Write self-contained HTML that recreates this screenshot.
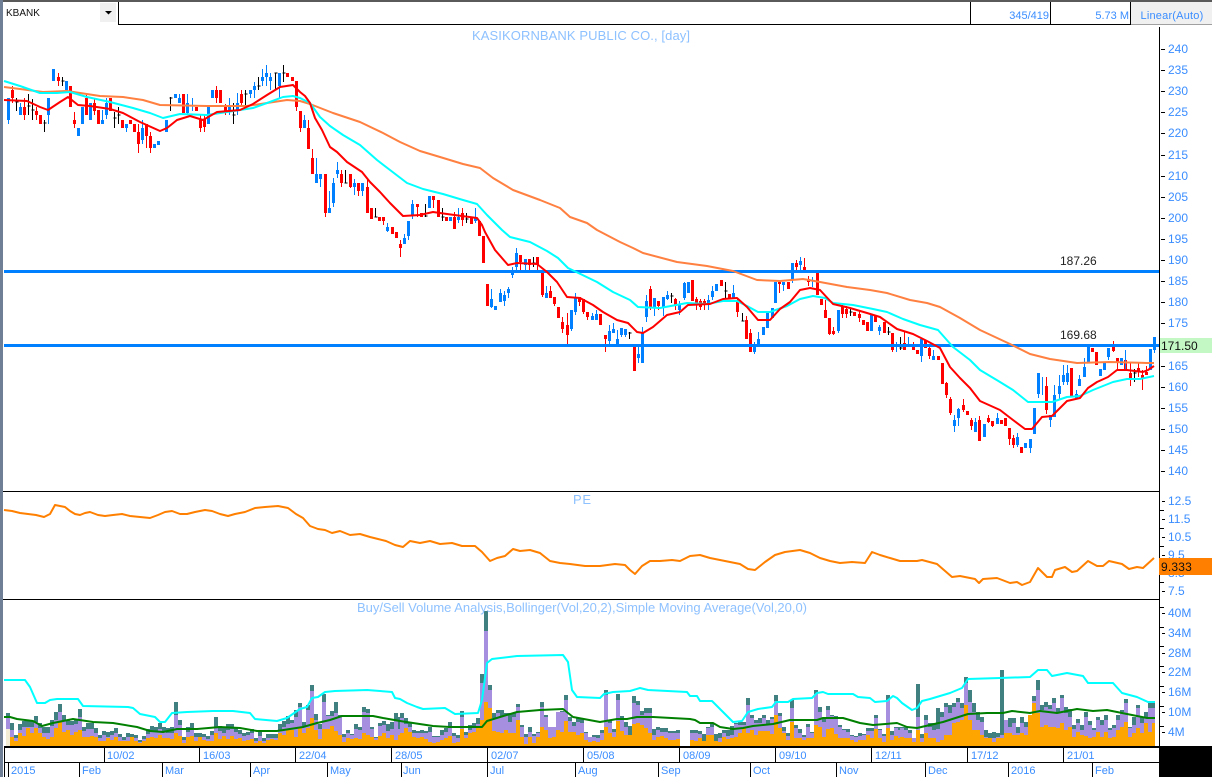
<!DOCTYPE html>
<html><head><meta charset="utf-8"><title>KBANK</title>
<style>
html,body{margin:0;padding:0;background:#fff;width:1212px;height:777px;overflow:hidden}
svg{display:block}
text{font-family:"Liberation Sans",Arial,sans-serif}
.a{font-size:12px;fill:#3a8dff}
.t{font-size:11px;fill:#3a8dff}
.h{font-size:13px;fill:#8ec1ff}
</style></head><body>
<svg width="1212" height="777" viewBox="0 0 1212 777" xmlns="http://www.w3.org/2000/svg">
<rect width="1212" height="777" fill="#fff"/>
<!-- candles -->
<g transform="translate(.5 0)" shape-rendering="crispEdges" fill="none">
<path stroke="#f00" d="M12 86V103M24 98V120M36 107V120M58 73V86M74 112V128M86 95V115M94 98V115M138 124V153M146 124V148M150 132V153M200 115V132M204 115V132M216 86V103M225 104V115M241 90V107M296 100V111M300 111V132M308 120V149M312 149V174M325 174V217M341 170V187M350 174V188M358 183V196M367 178V213M383 217V225M400 240V257M417 204V217M433 196V208M454 212V229M462 208V226M520 255V270M529 259V270M537 257V270M542 272V297M550 286V298M554 297V306M562 317V333M567 313V344M579 297V306M583 299V314M587 312V320M605 335V352M650 286V310M658 301V310M675 298V310M696 297V310M700 299V310M704 299V310M737 298V317M746 316V339M750 329V352M779 282V293M796 260V272M804 258V273M808 276V286M825 300V318M829 318V335M833 327V335M842 305V318M846 306V318M859 310V322M892 333V352M904 332V350M913 342V350M929 347V359M946 382V398M950 397V415M963 399V412M971 418V430M979 416V441M988 415V423M992 421V427M1009 428V445M1013 435V448M1046 377V414M1113 341V352M1117 358V370M1130 362V386M1138 363V377M1142 370V390M1146 366V375"/>
<path stroke="#f00" stroke-width="3" d="M12 90V98M24 107V115M36 111V115M40 115V124M58 77V81M70 86V107M74 120V124M86 98V115M94 103V111M98 110V124M110 98V111M122 120V128M130 120V124M134 124V132M138 132V144M146 124V136M150 136V148M183 94V113M196 107V111M200 120V128M204 119V127M216 90V98M220 90V103M225 107V111M241 94V103M287 73V77M292 77V81M296 81V107M300 111V128M308 128V149M312 158V174M325 174V213M341 174V183M350 174V187M358 183V191M367 187V213M371 208V219M379 217V221M383 217V221M392 227V234M396 232V238M400 244V248M417 204V207M421 213V217M433 196V200M438 200V217M446 217V221M454 217V229M462 213V220M471 217V224M479 221V236M483 236V263M487 284V306M520 255V262M529 259V265M537 257V265M542 272V295M550 291V298M554 297V304M558 307V318M562 322V329M567 325V335M579 297V302M583 299V312M587 312V317M600 314V325M605 335V339M634 347V371M650 289V307M658 301V306M675 299V305M692 280V301M696 299V303M700 301V307M704 301V305M721 280V286M729 294V299M737 302V312M746 320V339M750 333V352M779 282V284M788 282V289M796 263V267M804 267V271M808 279V282M817 273V295M821 299V305M825 310V318M829 318V334M833 331V334M842 306V314M846 309V314M854 312V316M859 314V318M863 320V325M867 322V331M875 315V322M884 322V333M892 333V350M904 343V350M913 346V350M917 350V354M925 340V348M929 348V356M938 356V360M942 363V384M946 383V395M950 399V413M963 405V410M967 411V415M971 420V426M979 420V441M988 418V422M992 421V426M1001 420V424M1005 418V426M1009 428V439M1013 438V445M1021 447V453M1046 386V410M1071 368V396M1092 348V352M1096 352V365M1113 347V351M1117 358V363M1125 360V371M1130 373V378M1138 368V372M1142 375V378M1146 372V375"/>
<path stroke="#0080ff" d="M8 98V124M20 103V115M48 98V124M102 110V124M106 98V119M126 124V132M142 120V144M179 94V103M187 94V115M192 98V111M229 98V115M237 93V115M250 90V98M254 82V98M262 69V86M266 65V86M270 73V90M279 73V98M304 115V128M316 158V183M320 174V187M329 191V213M333 178V207M337 162V178M354 179V195M362 183V196M387 223V232M404 234V244M408 221V240M412 200V219M458 208V223M475 208V223M491 289V308M500 289V302M504 291V306M508 287V298M512 267V278M516 248V270M525 259V270M546 286V298M571 310V331M575 293V315M592 313V320M596 310V320M609 325V347M613 323V333M617 330V347M621 328V337M625 329V337M638 347V363M642 327V363M646 295V322M654 298V316M663 297V316M667 291V300M679 301V315M684 282V300M708 295V310M712 286V300M733 285V298M754 342V354M758 332V347M783 282V291M792 263V283M800 257V273M812 277V287M838 310V333M879 325V335M896 342V352M908 337V347M921 339V362M933 350V360M954 415V432M958 408V426M975 418V432M997 413V424M1017 433V447M1030 439V453M1038 373V398M1042 377V395M1050 415V427M1054 385V417M1059 375V400M1063 365V385M1067 365V385M1076 390V398M1079 375V386M1084 358V377M1108 348V360M1125 350V370M1154 337V353"/>
<path stroke="#0080ff" stroke-width="3" d="M8 98V120M20 107V115M48 98V115M53 69V81M66 81V90M78 128V136M82 107V124M90 103V120M102 120V124M106 103V115M126 124V128M142 128V140M154 144V148M158 141V145M166 120V132M175 94V98M179 98V103M187 103V113M208 107V124M212 90V98M229 107V111M237 103V111M250 90V94M254 86V90M262 77V81M266 73V77M270 77V81M279 73V86M304 120V128M316 174V183M320 174V179M329 208V213M333 183V203M337 170V174M354 183V187M362 183V191M387 227V231M404 238V244M408 221V236M412 204V215M429 196V208M450 217V221M458 217V220M475 217V221M491 299V307M495 306V310M500 293V302M504 295V301M508 289V293M512 271V275M516 253V267M525 259V265M546 293V298M571 310V329M575 297V312M592 316V320M596 314V320M609 331V341M613 329V333M617 339V347M621 328V335M625 329V335M638 354V358M642 333V363M646 301V317M654 298V307M663 297V307M667 295V299M679 305V310M684 283V298M688 282V293M708 300V305M712 291V297M716 284V291M733 293V298M754 347V352M758 339V347M763 327V335M767 313V328M772 308V318M775 282V303M783 282V285M792 263V280M800 261V265M838 310V331M871 314V331M879 327V331M921 339V356M933 356V360M954 420V426M958 409V418M975 422V432M984 424V437M997 418V424M1017 437V445M1025 443V448M1030 439V448M1034 408V434M1038 373V394M1050 415V420M1054 395V417M1059 386V394M1063 375V382M1067 373V382M1076 394V398M1079 379V386M1084 367V377M1088 345V363M1100 369V376M1104 363V370M1108 348V357M1121 358V365M1150 349V370M1154 337V350"/>
<path stroke="#000" d="M16 98V111M15 102h3M28 94V115M27 106h3M32 99V120M31 110h3M44 120V132M43 123h3M62 77V86M61 81h3M114 112V128M113 118h3M118 107V124M117 115h3M170 97V111M169 98h3M233 103V124M232 115h3M245 90V107M244 94h3M258 77V90M257 86h3M275 73V90M274 73h3M283 65V82M282 73h3M345 170V183M344 183h3M375 208V217M374 217h3M425 204V217M424 216h3M442 208V221M441 217h3M466 213V223M465 219h3M533 257V267M532 263h3M629 332V339M628 333h3M671 293V303M670 296h3M725 282V298M724 291h3M742 313V321M741 321h3M850 309V316M849 312h3M888 327V335M887 332h3M900 337V350M899 348h3M1134 369V382M1133 373h3"/>
</g>
<!-- horizontal lines -->
<rect x="4" y="270" width="1155" height="3" fill="#0080ff"/>
<rect x="4" y="344" width="1155" height="3" fill="#0080ff"/>
<!-- moving averages -->
<g fill="none" stroke-width="2" stroke-linejoin="round">
<polyline stroke="#ff8040" points="4,87 20,89 43,92 67,91 100,96 123,97 143,100 160,105 207,106 247,106 267,103 287,100 300,101 310,104 333,113 360,122 383,133 400,142 420,151 440,157 463,164 480,168 493,178 513,190 540,200 560,208 570,217 587,223 597,230 620,242 633,248 643,253 677,262 707,266 733,271 757,280 780,281 803,279 820,282 847,287 870,290 887,293 910,300 927,303 940,307 960,318 980,330 1010,344 1030,354 1050,359 1077,363 1110,362 1147,363 1154,363"/>
<polyline stroke="#00ffff" points="4,81 20,86 40,93 57,93 70,92 87,97 110,102 133,108 150,113 163,118 180,114 207,115 227,112 253,108 267,103 283,97 293,96 300,98 310,103 320,117 330,126 343,135 360,145 377,160 390,170 407,183 423,189 443,194 463,200 477,204 487,215 502,230 510,237 530,242 547,251 558,258 568,268 597,282 613,292 630,300 638,307 660,308 687,303 707,304 723,301 737,301 747,306 758,312 770,312 787,306 800,299 813,296 825,298 833,303 853,305 873,309 887,312 903,319 920,325 938,330 953,347 970,360 980,370 1000,382 1013,390 1028,402 1052,402 1067,397 1080,396 1093,390 1113,382 1127,379 1140,379 1154,376"/>
<polyline stroke="#ff0000" points="4,100 27,101 40,107 48,110 60,102 68,97 78,105 90,106 110,109 123,113 140,122 160,131 167,128 177,120 190,116 203,120 217,112 240,110 253,104 267,95 280,87 293,85 300,92 305,96 310,103 315,118 322,130 330,147 337,152 347,162 362,172 370,182 380,192 390,203 403,216 420,215 433,212 447,214 477,218 482,225 485,232 495,250 508,265 517,263 537,264 547,272 557,282 567,297 580,298 593,305 603,312 617,320 628,323 637,332 643,333 653,327 667,315 680,312 688,305 710,304 723,299 737,298 747,307 758,320 770,320 780,309 790,302 800,290 810,288 820,290 833,304 850,308 867,313 880,317 897,329 913,334 927,341 940,348 950,367 960,378 970,388 980,401 1000,410 1013,420 1025,429 1032,429 1042,417 1052,416 1067,401 1080,398 1088,388 1097,382 1108,377 1117,370 1127,370 1143,372 1148,370 1154,366"/>
</g>
<!-- PE line -->
<polyline fill="none" stroke="#ff8000" stroke-width="2" stroke-linejoin="round" points="4,510 12,511 20,513 28,514 36,515 44,517 50,514 55,505 60,506 65,507 70,511 75,514 80,515 85,513 90,512 98,515 105,516 113,515 122,514 130,516 140,517 150,518 158,515 165,512 172,511 180,514 187,514 195,512 205,510 212,511 220,514 228,516 235,514 245,512 255,508 265,507 278,506 288,508 296,514 303,518 310,526 318,529 325,530 332,533 340,531 350,535 360,534 370,537 378,539 386,541 395,545 403,547 410,541 420,543 430,541 440,544 452,543 462,546 475,546 482,552 490,561 497,558 505,556 513,549 520,551 530,550 540,553 550,561 560,563 570,564 585,566 600,566 615,564 625,565 630,570 635,574 642,566 650,561 660,561 672,560 680,561 690,556 700,555 710,558 720,560 730,562 740,564 748,569 755,570 765,562 775,555 785,552 800,550 810,553 820,558 830,561 840,563 852,562 865,563 872,552 880,555 890,558 900,561 917,561 922,560 937,564 952,577 960,576 975,579 979,583 983,579 997,578 1010,583 1017,582 1022,585 1030,582 1038,568 1047,577 1052,577 1055,570 1065,567 1072,572 1077,571 1088,561 1097,566 1103,566 1109,561 1122,564 1129,569 1137,567 1143,568 1154,558"/>
<!-- volume bars -->
<g shape-rendering="crispEdges">
<path fill="#408080" d="M6 746V713h4V723h4V735h4V724h4V721h4V721h4V721h4V716h4V723h4V727h4V727h4V720h4V712h4V704h4V715h4V720h4V721h4V719h4V709h4V727h4V723h4V723h4V728h4V735h4V731h4V732h4V731h4V728h4V734h4V737h4V733h4V734h4V735h4V740h4V736h4V729h4V726h4V727h4V723h4V727h4V728h4V727h4V702h4V720h4V737h4V727h4V723h4V733h4V733h4V734h4V736h4V731h4V717h4V726h4V728h4V724h4V724h4V728h4V730h4V733h4V732h4V729h4V738h4V732h4V738h4V734h4V734h4V734h4V724h4V721h4V716h4V746ZM290 746V720h4V710h4V703h4V722h4V705h4V685h4V714h4V724h4V694h4V715h4V711h4V702h4V715h4V734h4V730h4V734h4V724h4V727h4V707h4V709h4V727h4V737h4V723h4V721h4V724h4V722h4V713h4V717h4V746ZM400 746V713h4V718h4V722h4V730h4V731h4V730h4V731h4V727h4V736h4V736h4V730h4V728h4V722h4V733h4V735h4V711h4V732h4V725h4V723h4V718h4V674h4V611h4V685h4V713h4V710h4V710h4V713h4V713h4V713h4V704h4V725h4V734h4V727h4V734h4V732h4V702h4V715h4V728h4V727h4V712h4V711h4V695h4V717h4V722h4V718h4V718h4V732h4V737h4V735h4V735h4V730h4V690h4V721h4V729h4V694h4V716h4V722h4V726h4V696h4V701h4V711h4V708h4V708h4V729h4V727h4V728h4V728h4V731h4V731h4V730h4V746ZM690 746V730h4V730h4V731h4V734h4V727h4V723h4V734h4V733h4V730h4V730h4V726h4V723h4V722h4V722h4V698h4V715h4V720h4V718h4V715h4V720h4V717h4V695h4V713h4V727h4V733h4V700h4V725h4V729h4V735h4V724h4V732h4V690h4V707h4V718h4V706h4V715h4V716h4V725h4V729h4V729h4V735h4V736h4V733h4V734h4V728h4V728h4V715h4V729h4V734h4V695h4V731h4V727h4V727h4V746ZM900 746V727h4V727h4V730h4V738h4V684h4V734h4V715h4V723h4V723h4V708h4V712h4V703h4V705h4V703h4V698h4V703h4V677h4V690h4V703h4V712h4V717h4V730h4V733h4V732h4V733h4V670h4V720h4V718h4V718h4V727h4V717h4V722h4V717h4V696h4V680h4V705h4V702h4V705h4V698h4V708h4V695h4V707h4V709h4V725h4V719h4V725h4V712h4V721h4V728h4V717h4V720h4V715h4V728h4V725h4V715h4V710h4V699h4V727h4V717h4V705h4V717h4V712h4V703h4V703h3V746Z"/>
<path fill="#a78fe0" d="M6 746V718h4V730h4V738h4V730h4V727h4V727h4V727h4V722h4V728h4V733h4V733h4V726h4V720h4V712h4V720h4V725h4V725h4V724h4V717h4V731h4V729h4V729h4V733h4V738h4V735h4V737h4V735h4V733h4V737h4V740h4V737h4V738h4V738h4V742h4V739h4V734h4V731h4V731h4V729h4V732h4V733h4V733h4V715h4V725h4V740h4V732h4V729h4V737h4V737h4V737h4V739h4V735h4V727h4V731h4V733h4V730h4V729h4V732h4V734h4V736h4V735h4V733h4V741h4V736h4V741h4V738h4V738h4V738h4V730h4V727h4V724h4V746ZM290 746V723h4V717h4V707h4V726h4V710h4V691h4V720h4V729h4V702h4V716h4V716h4V713h4V717h4V737h4V733h4V735h4V729h4V730h4V712h4V713h4V729h4V738h4V726h4V725h4V731h4V729h4V721h4V729h4V746ZM400 746V718h4V724h4V727h4V733h4V733h4V733h4V733h4V732h4V737h4V737h4V735h4V732h4V728h4V736h4V738h4V717h4V735h4V730h4V726h4V724h4V683h4V631h4V690h4V718h4V713h4V716h4V715h4V722h4V717h4V707h4V727h4V737h4V732h4V736h4V733h4V707h4V717h4V727h4V727h4V712h4V712h4V700h4V721h4V726h4V722h4V723h4V733h4V737h4V737h4V738h4V733h4V695h4V723h4V732h4V700h4V718h4V727h4V735h4V703h4V705h4V715h4V713h4V713h4V735h4V730h4V732h4V732h4V733h4V733h4V733h4V746ZM690 746V733h4V733h4V734h4V741h4V728h4V727h4V741h4V738h4V733h4V736h4V735h4V724h4V725h4V725h4V705h4V718h4V723h4V723h4V718h4V724h4V719h4V701h4V716h4V731h4V736h4V708h4V728h4V733h4V737h4V727h4V733h4V694h4V712h4V722h4V710h4V716h4V718h4V727h4V730h4V732h4V736h4V737h4V736h4V735h4V731h4V731h4V718h4V730h4V736h4V700h4V735h4V728h4V730h4V746ZM900 746V728h4V730h4V733h4V738h4V717h4V738h4V720h4V727h4V730h4V729h4V717h4V707h4V713h4V707h4V702h4V708h4V683h4V702h4V712h4V720h4V722h4V737h4V738h4V738h4V737h4V735h4V720h4V727h4V723h4V733h4V723h4V727h4V720h4V701h4V690h4V710h4V707h4V709h4V703h4V713h4V698h4V713h4V717h4V729h4V723h4V730h4V717h4V725h4V730h4V720h4V725h4V720h4V730h4V728h4V720h4V712h4V703h4V728h4V725h4V708h4V723h4V717h4V708h4V708h3V746Z"/>
<path fill="#ffa500" d="M10 746V737h4V741h4V733h4V736h4V728h4V733h4V728h4V733h4V737h4V739h4V737h4V728h4V722h4V732h4V730h4V735h4V732h4V730h4V737h4V737h4V736h4V737h4V741h4V741h4V738h4V740h4V737h4V741h4V741h4V741h4V737h4V741h4V743h4V741h4V738h4V737h4V738h4V735h4V738h4V738h4V739h4V733h4V736h4V743h4V737h4V736h4V741h4V737h4V740h4V741h4V741h4V733h4V739h4V736h4V739h4V736h4V739h4V738h4V741h4V740h4V739h4V743h4V741h4V743h4V740h4V739h4V740h4V733h4V735h4V730h4V746ZM290 746V730h4V737h4V728h4V733h4V728h4V718h4V730h4V739h4V729h4V729h4V726h4V731h4V735h4V742h4V738h4V739h4V738h4V739h4V733h4V735h4V737h4V740h4V736h4V733h4V738h4V735h4V740h4V735h4V746ZM400 746V733h4V728h4V732h4V737h4V738h4V737h4V739h4V742h4V743h4V742h4V740h4V738h4V736h4V743h4V742h4V729h4V738h4V733h4V732h4V727h4V720h4V702h4V708h4V731h4V732h4V733h4V730h4V733h4V733h4V720h4V737h4V744h4V737h4V743h4V737h4V727h4V730h4V738h4V737h4V730h4V732h4V721h4V732h4V732h4V735h4V733h4V740h4V742h4V741h4V742h4V740h4V727h4V733h4V737h4V721h4V731h4V735h4V735h4V724h4V723h4V725h4V728h4V733h4V740h4V737h4V736h4V738h4V740h4V740h4V739h4V746ZM690 746V740h4V741h4V738h4V741h4V735h4V735h4V741h4V742h4V737h4V739h4V738h4V737h4V733h4V728h4V733h4V730h4V735h4V731h4V731h4V731h4V734h4V715h4V728h4V733h4V740h4V722h4V738h4V738h4V740h4V738h4V738h4V725h4V727h4V737h4V729h4V728h4V734h4V738h4V738h4V738h4V740h4V742h4V740h4V740h4V735h4V738h4V729h4V738h4V742h4V728h4V740h4V736h4V738h4V746ZM900 746V737h4V738h4V738h4V742h4V730h4V742h4V733h4V738h4V738h4V742h4V740h4V735h4V735h4V723h4V722h4V720h4V705h4V720h4V730h4V730h4V735h4V738h4V738h4V742h4V738h4V738h4V733h4V733h4V735h4V735h4V733h4V735h4V715h4V703h4V713h4V727h4V725h4V727h4V727h4V728h4V723h4V730h4V727h4V737h4V732h4V735h4V736h4V738h4V737h4V732h4V737h4V732h4V738h4V737h4V730h4V727h4V722h4V737h4V733h4V728h4V733h4V723h4V732h4V723h3V746Z"/>
<rect x="6" y="729" width="4" height="17" fill="#f3edd5"/>
</g>
<g fill="none" stroke-width="2" stroke-linejoin="round">
<polyline stroke="#00ffff" points="4,680 25,680 30,687 37,703 45,703 50,700 57,699 78,699 83,706 128,707 133,708 140,714 155,717 160,722 165,722 172,713 187,712 213,711 233,711 250,713 255,719 277,721 287,718 300,709 307,707 312,698 318,697 325,692 335,691 367,690 380,691 392,692 395,698 400,699 407,703 417,707 423,709 445,708 455,714 478,713 482,700 487,663 492,659 517,656 563,655 568,662 572,690 577,697 600,698 604,694 613,692 630,691 640,688 648,690 687,692 690,696 697,696 700,701 712,701 722,711 733,722 742,721 748,712 758,709 772,707 776,702 788,702 793,699 812,698 817,693 823,692 828,694 853,694 858,697 870,698 875,702 887,701 893,696 897,698 902,703 912,710 917,708 922,701 930,699 950,693 962,688 968,679 1000,678 1030,677 1038,670 1047,670 1052,676 1067,673 1083,676 1088,683 1113,683 1122,693 1137,697 1148,702 1155,702"/>
<polyline stroke="#008000" points="4,717 10,717 17,719 33,721 42,726 53,723 73,719 93,722 113,723 137,727 150,731 163,732 177,729 197,729 220,727 240,728 257,731 277,731 290,729 303,727 317,723 330,720 342,716 373,716 383,718 400,721 413,723 433,726 450,727 482,727 487,721 500,717 517,712 540,710 563,709 573,717 600,722 617,719 627,719 637,717 653,717 690,719 695,720 700,723 713,723 720,727 733,729 743,728 753,726 773,724 790,720 817,720 823,718 843,718 860,723 873,725 897,723 907,727 917,728 943,722 968,714 987,713 1003,713 1012,711 1030,713 1040,711 1057,713 1077,709 1093,711 1107,710 1127,714 1147,718 1155,718"/>
</g>
<!-- toolbar -->
<rect x="0" y="0" width="1212" height="2" fill="#5a5a5a"/>
<rect x="0" y="0" width="3" height="777" fill="#6f7f95"/>
<rect x="100" y="3" width="16" height="19" fill="#f0f0f0"/>
<path d="M105 11h7l-3.500 3.500z" fill="#000"/>
<text x="6" y="16" font-size="10" fill="#111">KBANK</text>
<rect x="118" y="2" width="1" height="23" fill="#000"/>
<rect x="118" y="24" width="1013" height="1" fill="#000"/>
<rect x="970" y="2" width="1" height="23" fill="#000"/>
<rect x="1050" y="2" width="1" height="23" fill="#000"/>
<rect x="1130" y="2" width="1" height="23" fill="#000"/>
<rect x="1131" y="2" width="81" height="22" fill="#f0f0f0"/>
<rect x="1131" y="24" width="81" height="1" fill="#a0a0a0"/>
<text x="1049" y="19" font-size="11" fill="#3a8dff" text-anchor="end">345/419</text>
<text x="1129" y="19" font-size="11" fill="#3a8dff" text-anchor="end">5.73 M</text>
<text x="1172" y="19" font-size="11" fill="#3a8dff" text-anchor="middle" letter-spacing=".2">Linear(Auto)</text>
<!-- titles -->
<text x="472" y="40" class="h" textLength="218">KASIKORNBANK PUBLIC CO., [day]</text>
<text x="573" y="504" class="h" textLength="18">PE</text>
<text x="357" y="612" class="h" textLength="450">Buy/Sell Volume Analysis,Bollinger(Vol,20,2),Simple Moving Average(Vol,20,0)</text>
<text x="1060" y="265" font-size="12" fill="#222">187.26</text>
<text x="1060" y="339" font-size="12" fill="#222">169.68</text>
<!-- panel frames -->
<rect x="1159" y="27" width="1" height="719" fill="#000"/>
<rect x="3" y="491" width="1156" height="1" fill="#000"/>
<rect x="3" y="599" width="1156" height="1" fill="#000"/>
<rect x="4" y="746" width="1155" height="2" fill="#000"/>
<rect x="4" y="762" width="1155" height="1" fill="#000"/>
<rect x="4" y="748" width="1" height="29" fill="#000"/>
<rect x="1159" y="746" width="53" height="31" fill="#000"/>
<!-- time axis -->
<path shape-rendering="crispEdges" stroke="#000" fill="none" transform="translate(.5 0)" d="M104 748V762M199 748V762M295 748V762M391 748V762M487 748V762M583 748V762M679 748V762M775 748V762M871 748V762M967 748V762M1063 748V762M8 762V777M79 762V777M162 762V777M250 762V777M327 762V777M401 762V777M487 762V777M575 762V777M658 762V777M750 762V777M836 762V777M925 762V777M1008 762V777M1092 762V777"/>
<g class="t">
<text class="t" x="107" y="759">10/02</text><text class="t" x="203" y="759">16/03</text><text class="t" x="299" y="759">22/04</text><text class="t" x="395" y="759">28/05</text><text class="t" x="491" y="759">02/07</text><text class="t" x="587" y="759">05/08</text><text class="t" x="683" y="759">08/09</text><text class="t" x="779" y="759">09/10</text><text class="t" x="875" y="759">12/11</text><text class="t" x="971" y="759">17/12</text><text class="t" x="1067" y="759">21/01</text>
<text class="t" x="11" y="774">2015</text><text class="t" x="82" y="774">Feb</text><text class="t" x="165" y="774">Mar</text><text class="t" x="253" y="774">Apr</text><text class="t" x="330" y="774">May</text><text class="t" x="403" y="774">Jun</text><text class="t" x="490" y="774">Jul</text><text class="t" x="578" y="774">Aug</text><text class="t" x="661" y="774">Sep</text><text class="t" x="753" y="774">Oct</text><text class="t" x="839" y="774">Nov</text><text class="t" x="928" y="774">Dec</text><text class="t" x="1011" y="774">2016</text><text class="t" x="1095" y="774">Feb</text>
</g>
<!-- axis ticks -->
<path shape-rendering="crispEdges" stroke="#000" fill="none" transform="translate(0 .5)" d="M1161 49h4M1161 70h4M1161 91h4M1161 112h4M1161 133h4M1161 155h4M1161 176h4M1161 197h4M1161 218h4M1161 239h4M1161 260h4M1161 281h4M1161 302h4M1161 323h4M1161 344h4M1161 366h4M1161 387h4M1161 408h4M1161 429h4M1161 450h4M1161 471h4M1162 501h3M1160 510h4M1162 519h3M1160 528h4M1162 537h3M1160 546h4M1162 555h3M1160 582h4M1162 591h3M1160 607h4M1162 613h3M1160 627h4M1162 633h3M1160 646h4M1162 653h3M1160 666h4M1162 672h3M1160 686h4M1162 692h3M1160 706h4M1162 712h3M1160 726h4M1162 732h3"/>
<!-- axis labels -->
<text class="a" x="1168" y="53">240</text><text class="a" x="1168" y="74">235</text><text class="a" x="1168" y="95">230</text><text class="a" x="1168" y="116">225</text><text class="a" x="1168" y="137">220</text><text class="a" x="1168" y="159">215</text><text class="a" x="1168" y="180">210</text><text class="a" x="1168" y="201">205</text><text class="a" x="1168" y="222">200</text><text class="a" x="1168" y="243">195</text><text class="a" x="1168" y="264">190</text><text class="a" x="1168" y="285">185</text><text class="a" x="1168" y="306">180</text><text class="a" x="1168" y="327">175</text><text class="a" x="1168" y="370">165</text><text class="a" x="1168" y="391">160</text><text class="a" x="1168" y="412">155</text><text class="a" x="1168" y="433">150</text><text class="a" x="1168" y="454">145</text><text class="a" x="1168" y="475">140</text>
<text class="a" x="1168" y="505">12.5</text><text class="a" x="1168" y="523">11.5</text><text class="a" x="1168" y="541">10.5</text><text class="a" x="1168" y="559">9.5</text><text class="a" x="1168" y="577">8.5</text><text class="a" x="1168" y="595">7.5</text>
<text class="a" x="1168" y="617">40M</text><text class="a" x="1168" y="637">34M</text><text class="a" x="1168" y="657">28M</text><text class="a" x="1168" y="676">22M</text><text class="a" x="1168" y="696">16M</text><text class="a" x="1168" y="716">10M</text><text class="a" x="1168" y="736">4M</text>
<!-- value badges -->
<rect x="1160" y="338" width="52" height="15" fill="#c3f7c3"/>
<text x="1161" y="350" font-size="12" fill="#111">171.50</text>
<rect x="1159" y="558" width="53" height="17" fill="#ff8000"/>
<text x="1161" y="571" font-size="12" fill="#111" letter-spacing=".2">9.333</text>
</svg>
</body></html>
